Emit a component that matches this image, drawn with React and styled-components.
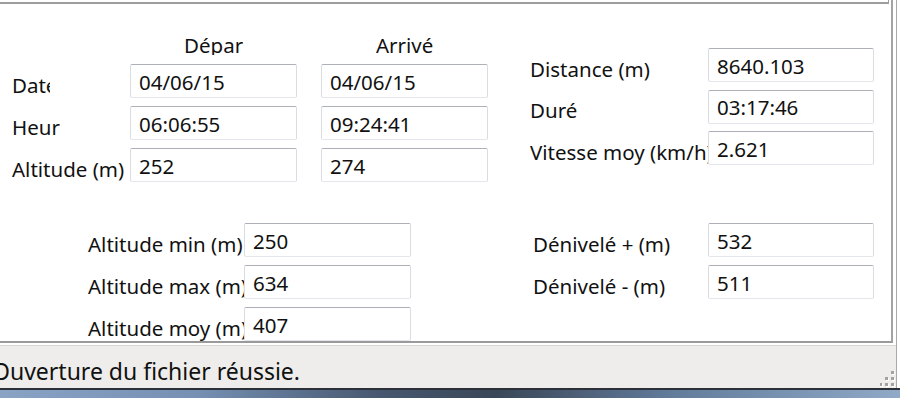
import React from "react";
import styled, { createGlobalStyle } from "styled-components";

const GlobalStyle = createGlobalStyle`
  body {
    margin: 0;
    background: #ffffff;
    font-family: "Noto Sans", "DejaVu Sans", sans-serif;
    color: #111111;
  }
`;

const Window = styled.div`
  width: 900px;
  height: 398px;
  display: flex;
  flex-direction: column;
  overflow: hidden;
  background: #ffffff;
`;

const Client = styled.div`
  flex: 1;
  width: 896px;
  display: flex;
  flex-direction: column;
  border-right: 1px solid #a9a9a9;
`;

const Content = styled.div`
  height: 341px;
  margin-right: 3px;
  border-right: 2px solid #a3a3a3;
  border-bottom: 2px solid #9a9a9a;
  overflow: hidden;
  background: #ffffff;
`;

const TopStrip = styled.div`
  width: 888px;
  height: 2px;
  border-bottom: 2px solid #9d9d9d;
  border-right: 1px solid #9d9d9d;
`;

const Section = styled.div`
  display: flex;
  align-items: flex-start;
  padding-top: ${({ $top }) => $top || 0}px;
`;

const Grid = styled.div`
  display: grid;
  margin-left: ${({ $left }) => $left}px;
  margin-top: ${({ $top }) => $top || 0}px;
  grid-template-columns: ${({ $cols }) => $cols};
  grid-template-rows: ${({ $rows }) => $rows};
  column-gap: ${({ $colGap }) => $colGap || 0}px;
  row-gap: ${({ $rowGap }) => $rowGap || 8}px;
`;

const HeaderCell = styled.div`
  grid-column: ${({ $col }) => $col};
  justify-self: center;
  width: ${({ $width }) => $width}px;
  height: 21px;
  line-height: 23px;
  font-size: 20.5px;
  white-space: nowrap;
  overflow: hidden;
`;

const Label = styled.div`
  grid-column: 1;
  font-size: 20.5px;
  line-height: 34px;
  padding-top: 3.5px;
  height: 30.5px;
  white-space: nowrap;
  ${({ $clip }) =>
    $clip ? `width: ${$clip}px; overflow-x: clip;` : "overflow: visible;"}
`;

const Field = styled.div`
  box-sizing: border-box;
  height: 34px;
  padding: 1.5px 0 0 8px;
  line-height: 30px;
  font-size: 20.5px;
  white-space: nowrap;
  overflow: hidden;
  background: #ffffff;
  border: 1px solid;
  border-color: #adb0b6 #d9dde3 #e3e7ec #d9dde3;
  border-radius: 2px;
`;

const Status = styled.div`
  margin-top: 2px;
  border-top: 1px solid #d7d5d2;
  height: 42px;
  background: #efedeb;
  display: flex;
  justify-content: space-between;
  overflow: hidden;
`;

const StatusText = styled.div`
  font-size: 23px;
  line-height: 32px;
  padding-top: 9px;
  margin-left: -8px;
  white-space: nowrap;
`;

const Grip = styled.svg`
  align-self: flex-end;
  margin-right: 1px;
  margin-bottom: 1px;
  flex-shrink: 0;
`;

const Frame = styled.div`
  height: 8px;
  border-top: 2px solid #2c3038;
  background: linear-gradient(
    90deg,
    #88a3c4 0%,
    #7590b3 22%,
    #475870 42%,
    #3a4757 55%,
    #627c9c 75%,
    #8fa9c7 100%
  );
`;

const topLeft = [
  { label: "Date", clip: 38, dep: "04/06/15", arr: "04/06/15" },
  { label: "Heure", clip: 48, dep: "06:06:55", arr: "09:24:41" },
  { label: "Altitude (m)", dep: "252", arr: "274" },
];

const topRight = [
  { label: "Distance (m)", value: "8640.103" },
  { label: "Durée", clip: 48, value: "03:17:46" },
  { label: "Vitesse moy (km/h)", clip: 178, value: "2.621" },
];

const altitudes = [
  { label: "Altitude min (m)", value: "250" },
  { label: "Altitude max (m)", value: "634" },
  { label: "Altitude moy (m)", value: "407" },
];

const denivele = [
  { label: "Dénivelé + (m)", value: "532" },
  { label: "Dénivelé - (m)", value: "511" },
];

const GripIcon = () => {
  const dots = [
    [11, 0],
    [5, 6],
    [11, 6],
    [-1, 12],
    [5, 12],
    [11, 12],
  ];
  return (
    <Grip width="15" height="16" viewBox="0 0 15 16">
      {dots.map(([x, y], i) => (
        <g key={i}>
          <rect x={x + 1} y={y + 1} width="3" height="3" fill="#ffffff" />
          <rect x={x} y={y} width="3" height="3" fill="#a2a2a2" />
        </g>
      ))}
    </Grip>
  );
};

const App = () => {
  return (
    <>
      <GlobalStyle />
      <Window>
        <Client>
          <Content>
            <TopStrip />
            <Section $top={30}>
              <Grid
                $left={12}
                $cols="94px 167px 167px"
                $rows="22px repeat(3, 34px)"
                $colGap={24}
              >
                <HeaderCell $col="2" $width={59}>
                  Départ
                </HeaderCell>
                <HeaderCell $col="3" $width={57}>
                  Arrivée
                </HeaderCell>
                {topLeft.map((row) => (
                  <React.Fragment key={row.label}>
                    <Label $clip={row.clip}>{row.label}</Label>
                    <Field>{row.dep}</Field>
                    <Field>{row.arr}</Field>
                  </React.Fragment>
                ))}
              </Grid>
              <Grid
                $left={42}
                $top={14}
                $cols="178px 166px"
                $rows="repeat(3, 34px)"
                $rowGap={7.5}
              >
                {topRight.map((row) => (
                  <React.Fragment key={row.label}>
                    <Label $clip={row.clip}>{row.label}</Label>
                    <Field>{row.value}</Field>
                  </React.Fragment>
                ))}
              </Grid>
            </Section>
            <Section $top={41}>
              <Grid $left={88} $cols="156px 167px" $rows="repeat(3, 34px)">
                {altitudes.map((row) => (
                  <React.Fragment key={row.label}>
                    <Label>{row.label}</Label>
                    <Field>{row.value}</Field>
                  </React.Fragment>
                ))}
              </Grid>
              <Grid $left={122} $cols="175px 166px" $rows="repeat(2, 34px)">
                {denivele.map((row) => (
                  <React.Fragment key={row.label}>
                    <Label>{row.label}</Label>
                    <Field>{row.value}</Field>
                  </React.Fragment>
                ))}
              </Grid>
            </Section>
          </Content>
          <Status>
            <StatusText>Ouverture du fichier réussie.</StatusText>
            <GripIcon />
          </Status>
        </Client>
        <Frame />
      </Window>
    </>
  );
};

export default App;
